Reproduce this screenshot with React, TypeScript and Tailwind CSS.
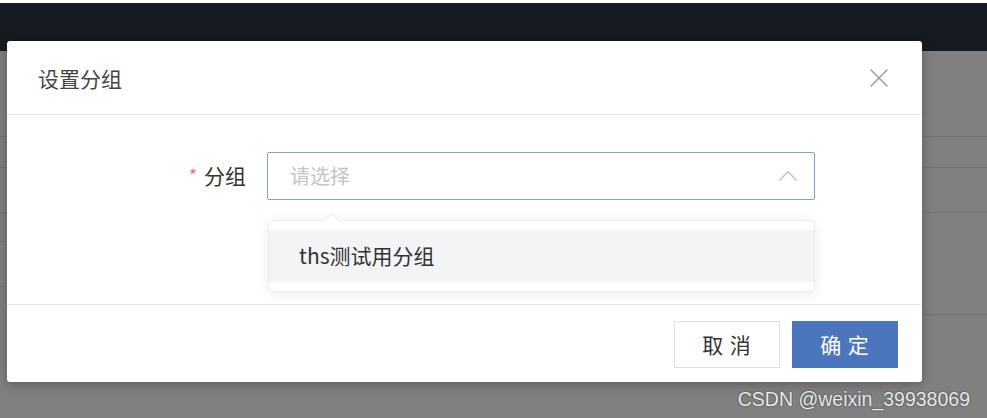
import { X, ChevronUp } from 'lucide-react';

const font = { fontFamily: '"Noto Sans CJK SC", "Noto Sans", sans-serif' };

const App = () => {
  return (
    <div className="relative w-[987px] h-[418px] overflow-hidden bg-[#808080]" style={font}>
      {/* Page behind the mask */}
      <div className="h-[3px] bg-white" />
      <div className="h-[48px] bg-[#161a22]" />
      <div className="flex">
        <div className="w-[500px]">
          <div className="h-[86px] border-b border-[#737373]" />
          <div className="h-[31px] border-b border-[#737373]" />
          <div className="h-[45px] border-b border-[#737373]" />
          <div className="h-[29px] border-b border-[#737373]" />
          <div className="h-[45px] border-b border-[#737373]" />
        </div>
        <div className="flex-1">
          <div className="h-[86px] border-b border-[#737373]" />
          <div className="h-[31px] border-b border-[#737373]" />
          <div className="h-[45px] border-b border-[#737373]" />
          <div className="h-[102px] border-b border-[#737373]" />
        </div>
      </div>

      {/* Dialog */}
      <div className="absolute left-[7px] top-[41px] w-[915px] h-[341px] bg-white rounded-[3px] shadow-[0_2px_12px_rgba(0,0,0,0.3)] flex flex-col">
        <div className="h-[74px] flex items-center justify-between pl-[31px] pr-[27px] border-b border-[#e3e7f0]">
          <span className="text-[21px] text-[#454545] pt-[2px]">设置分组</span>
          <X className="w-[32px] h-[32px] text-[#9a9ca2]" strokeWidth={1.1} />
        </div>

        <div className="h-[189px] pt-[37px] flex">
          <div className="w-[260px] flex justify-end items-start pt-[8px] pr-[21px]">
            <span className="text-[#f56c6c] text-[17px] mr-[7px] leading-[30px]">*</span>
            <span className="text-[21px] text-[#333] leading-[30px]">分组</span>
          </div>
          <div className="relative w-[548px]">
            <div className="h-[48px] border border-[#7fa0d5] rounded-[2px] flex items-center justify-between pl-[22px] pr-[9px]">
              <span className="text-[20px] text-[#c0c4cc]">请选择</span>
              <ChevronUp className="w-[34px] h-[34px] text-[#c0c4cc]" strokeWidth={1.1} />
            </div>

            {/* Dropdown */}
            <div className="absolute left-[1px] top-[68px] w-[547px] bg-white border border-[#eceef2] rounded-[5px] shadow-[0_2px_14px_rgba(0,0,0,0.08)] py-[9px]">
              <div className="absolute -top-[6px] left-[57px] w-[11px] h-[11px] rotate-45 bg-white border-l border-t border-[#eceef2]" />
              <div className="h-[52px] bg-[#f3f4f6] flex items-center pl-[30px] text-[21px] text-[#333]">
                ths测试用分组
              </div>
            </div>
          </div>
        </div>

        <div className="flex-1 border-t border-[#e6e8ec] flex justify-end items-start pt-[16px] pr-[24px] gap-[12px]">
          <button className="w-[106px] h-[47px] border border-[#dcdfe6] bg-white text-[21px] text-[#333] tracking-[1px]">
            取 消
          </button>
          <button className="w-[106px] h-[47px] bg-[#4b76bd] text-[21px] text-white tracking-[1px]">
            确 定
          </button>
        </div>
      </div>

      {/* Watermark */}
      <div
        className="absolute right-[17px] top-[385px] text-[19.5px] text-[#e8e8e8] [text-shadow:0_0_2px_rgba(0,0,0,0.6)]"
        style={{ fontFamily: '"Liberation Sans", Arial, sans-serif' }}
      >
        CSDN @weixin_39938069
      </div>
    </div>
  );
};

export default App;
